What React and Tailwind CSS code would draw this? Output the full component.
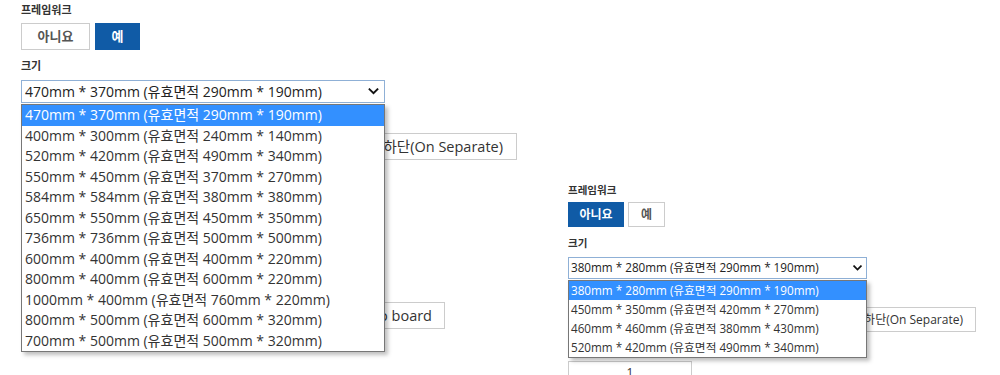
const FONT = '"Open Sans", "Noto Sans CJK KR", sans-serif';

const leftSizes = [
  "470mm * 370mm (유효면적 290mm * 190mm)",
  "400mm * 300mm (유효면적 240mm * 140mm)",
  "520mm * 420mm (유효면적 490mm * 340mm)",
  "550mm * 450mm (유효면적 370mm * 270mm)",
  "584mm * 584mm (유효면적 380mm * 380mm)",
  "650mm * 550mm (유효면적 450mm * 350mm)",
  "736mm * 736mm (유효면적 500mm * 500mm)",
  "600mm * 400mm (유효면적 400mm * 220mm)",
  "800mm * 400mm (유효면적 600mm * 220mm)",
  "1000mm * 400mm (유효면적 760mm * 220mm)",
  "800mm * 500mm (유효면적 600mm * 320mm)",
  "700mm * 500mm (유효면적 500mm * 320mm)",
];

const rightSizes = [
  "380mm * 280mm (유효면적 290mm * 190mm)",
  "450mm * 350mm (유효면적 420mm * 270mm)",
  "460mm * 460mm (유효면적 380mm * 430mm)",
  "520mm * 420mm (유효면적 490mm * 340mm)",
];

function Chevron({ className }) {
  return (
    <svg viewBox="0 0 12 8" className={className} fill="none">
      <path d="M1.5 1.5 L6 6 L10.5 1.5" stroke="#111" strokeWidth="2.2" strokeLinecap="square" />
    </svg>
  );
}

function LeftPanel() {
  return (
    <div className="w-[568px] shrink-0 pl-[21px]">
      <div className="h-[20px] text-[11px] font-bold leading-[20px] text-[#333]">프레임워크</div>
      <div className="mt-[3px] flex gap-[5px]">
        <button className="h-[27px] w-[69px] border border-[#ccc] bg-white text-[13px] font-semibold text-[#555]">
          아니요
        </button>
        <button className="h-[27px] w-[45px] bg-[#105ba6] text-[13px] font-semibold text-white">예</button>
      </div>
      <div className="mt-[6px] h-[20px] text-[11px] font-bold leading-[20px] text-[#333]">크기</div>
      <div className="relative mt-[4px] w-[364px]">
        <div className="flex h-[23px] items-center justify-between border border-[#8fb0d6] bg-white pl-[3px] pr-[5px] text-[14px] text-[#222]">
          <span>470mm * 370mm (유효면적 290mm * 190mm)</span>
          <Chevron className="h-[7px] w-[11px]" />
        </div>
        <div className="absolute left-0 top-[24px] z-10 w-[364px] border border-[#777] bg-white shadow-[3px_3px_4px_rgba(0,0,0,0.25)]">
          {leftSizes.map((s, i) => (
            <div
              key={s}
              className={`h-[20.5px] pl-[3px] text-[14px] leading-[20.5px] ${
                i === 0 ? "bg-[#3390ff] text-white" : "text-[#333]"
              }`}
            >
              {s}
            </div>
          ))}
        </div>
      </div>
      <div className="mt-[30px] flex w-[496px] justify-end">
        <button className="h-[27px] w-[200px] border border-[#ccc] bg-white pr-[13px] text-right text-[14.5px] text-[#333]">
          상단 / 하단(On Separate)
        </button>
      </div>
      <div className="mt-[142px] flex w-[424px] justify-end">
        <button className="h-[27px] w-[130px] border border-[#ccc] bg-white pr-[12px] text-right text-[14.5px] text-[#333]">
          Add to board
        </button>
      </div>
    </div>
  );
}

function RightPanel() {
  return (
    <div className="w-[420px] shrink-0 pt-[180px]">
      <div className="h-[20px] text-[10.5px] font-bold leading-[20px] text-[#333]">프레임워크</div>
      <div className="mt-[2px] flex gap-[4px]">
        <button className="h-[25px] w-[56px] bg-[#105ba6] text-[12px] font-semibold text-white">아니요</button>
        <button className="h-[25px] w-[37px] border border-[#ccc] bg-white text-[12px] font-semibold text-[#555]">
          예
        </button>
      </div>
      <div className="mt-[6px] h-[20px] text-[10.5px] font-bold leading-[20px] text-[#333]">크기</div>
      <div className="relative mt-[4px] w-[299px]">
        <div className="flex h-[22px] items-center justify-between border border-[#8fb0d6] bg-white pl-[2px] pr-[4px] text-[11.7px] text-[#222]">
          <span>380mm * 280mm (유효면적 290mm * 190mm)</span>
          <Chevron className="h-[6px] w-[9px]" />
        </div>
        <div className="absolute left-0 top-[23px] z-10 w-[299px] border border-[#777] bg-white shadow-[3px_3px_4px_rgba(0,0,0,0.25)]">
          {rightSizes.map((s, i) => (
            <div
              key={s}
              className={`h-[19px] pl-[2px] text-[11.7px] leading-[19px] ${
                i === 0 ? "bg-[#3390ff] text-white" : "text-[#333]"
              }`}
            >
              {s}
            </div>
          ))}
        </div>
      </div>
      <div className="mt-[28px] flex w-[408px] justify-end">
        <button className="h-[25px] w-[180px] border border-[#ccc] bg-white pr-[12px] text-right text-[12px] text-[#333]">
          상단 / 하단(On Separate)
        </button>
      </div>
      <div className="mt-[29px] flex h-[24px] w-[124px] items-center justify-center border border-[#ccc] text-[12px] text-[#333]">
        1
      </div>
    </div>
  );
}

export default function App() {
  return (
    <div className="flex h-[375px] w-[1000px] overflow-hidden bg-white" style={{ fontFamily: FONT }}>
      <LeftPanel />
      <RightPanel />
    </div>
  );
}
